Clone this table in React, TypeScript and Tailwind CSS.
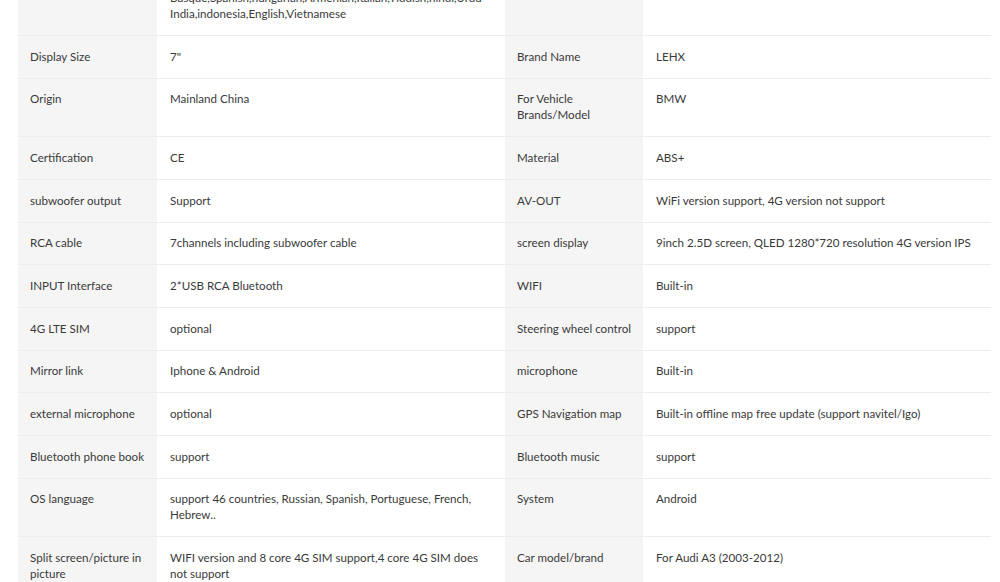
type Row = { l1: string; v1: string; l2: string; v2: string };

const rows: Row[] = [
  {
    l1: "",
    v1: "Basque,Spanish,hungarian,Armenian,Italian,Yiddish,hindi,Urdu India,indonesia,English,Vietnamese",
    l2: "",
    v2: "",
  },
  { l1: "Display Size", v1: "7\"", l2: "Brand Name", v2: "LEHX" },
  { l1: "Origin", v1: "Mainland China", l2: "For Vehicle Brands/Model", v2: "BMW" },
  { l1: "Certification", v1: "CE", l2: "Material", v2: "ABS+" },
  { l1: "subwoofer output", v1: "Support", l2: "AV-OUT", v2: "WiFi version support, 4G version not support" },
  { l1: "RCA cable", v1: "7channels including subwoofer cable", l2: "screen display", v2: "9inch 2.5D screen, QLED 1280*720 resolution 4G version IPS" },
  { l1: "INPUT Interface", v1: "2*USB RCA Bluetooth", l2: "WIFI", v2: "Built-in" },
  { l1: "4G LTE SIM", v1: "optional", l2: "Steering wheel control", v2: "support" },
  { l1: "Mirror link", v1: "Iphone & Android", l2: "microphone", v2: "Built-in" },
  { l1: "external microphone", v1: "optional", l2: "GPS Navigation map", v2: "Built-in offline map free update (support navitel/Igo)" },
  { l1: "Bluetooth phone book", v1: "support", l2: "Bluetooth music", v2: "support" },
  { l1: "OS language", v1: "support 46 countries, Russian, Spanish, Portuguese, French, Hebrew..", l2: "System", v2: "Android" },
  { l1: "Split screen/picture in picture", v1: "WIFI version and 8 core 4G SIM support,4 core 4G SIM does not support", l2: "Car model/brand", v2: "For Audi A3 (2003-2012)" },
];

export default function App() {
  return (
    <div className="min-h-screen bg-white overflow-hidden" style={{ fontFamily: "Lato, 'Open Sans', sans-serif" }}>
      <div className="ml-[18px] mt-[-22.67px] w-[973px]">
        <table className="w-full table-fixed border-collapse text-[11.6px] leading-[16px] text-[#3a3a3a]">
          <colgroup>
            <col className="w-[139px]" />
            <col className="w-[348px]" />
            <col className="w-[138px]" />
            <col className="w-[348px]" />
          </colgroup>
          <tbody>
            {rows.map((r, i) => (
              <tr key={i} className="border-b border-[#ededed]">
                <td className="bg-[#f5f5f5] pl-3 pr-1 py-[12.83px] align-top">{r.l1}</td>
                <td className="pl-[13px] pr-[24px] py-[12.83px] align-top">{r.v1}</td>
                <td className="bg-[#f5f5f5] pl-3 pr-1 py-[12.83px] align-top">{r.l2}</td>
                <td className="pl-[13px] pr-[16px] py-[12.83px] align-top">{r.v2}</td>
              </tr>
            ))}
          </tbody>
        </table>
      </div>
    </div>
  );
}
